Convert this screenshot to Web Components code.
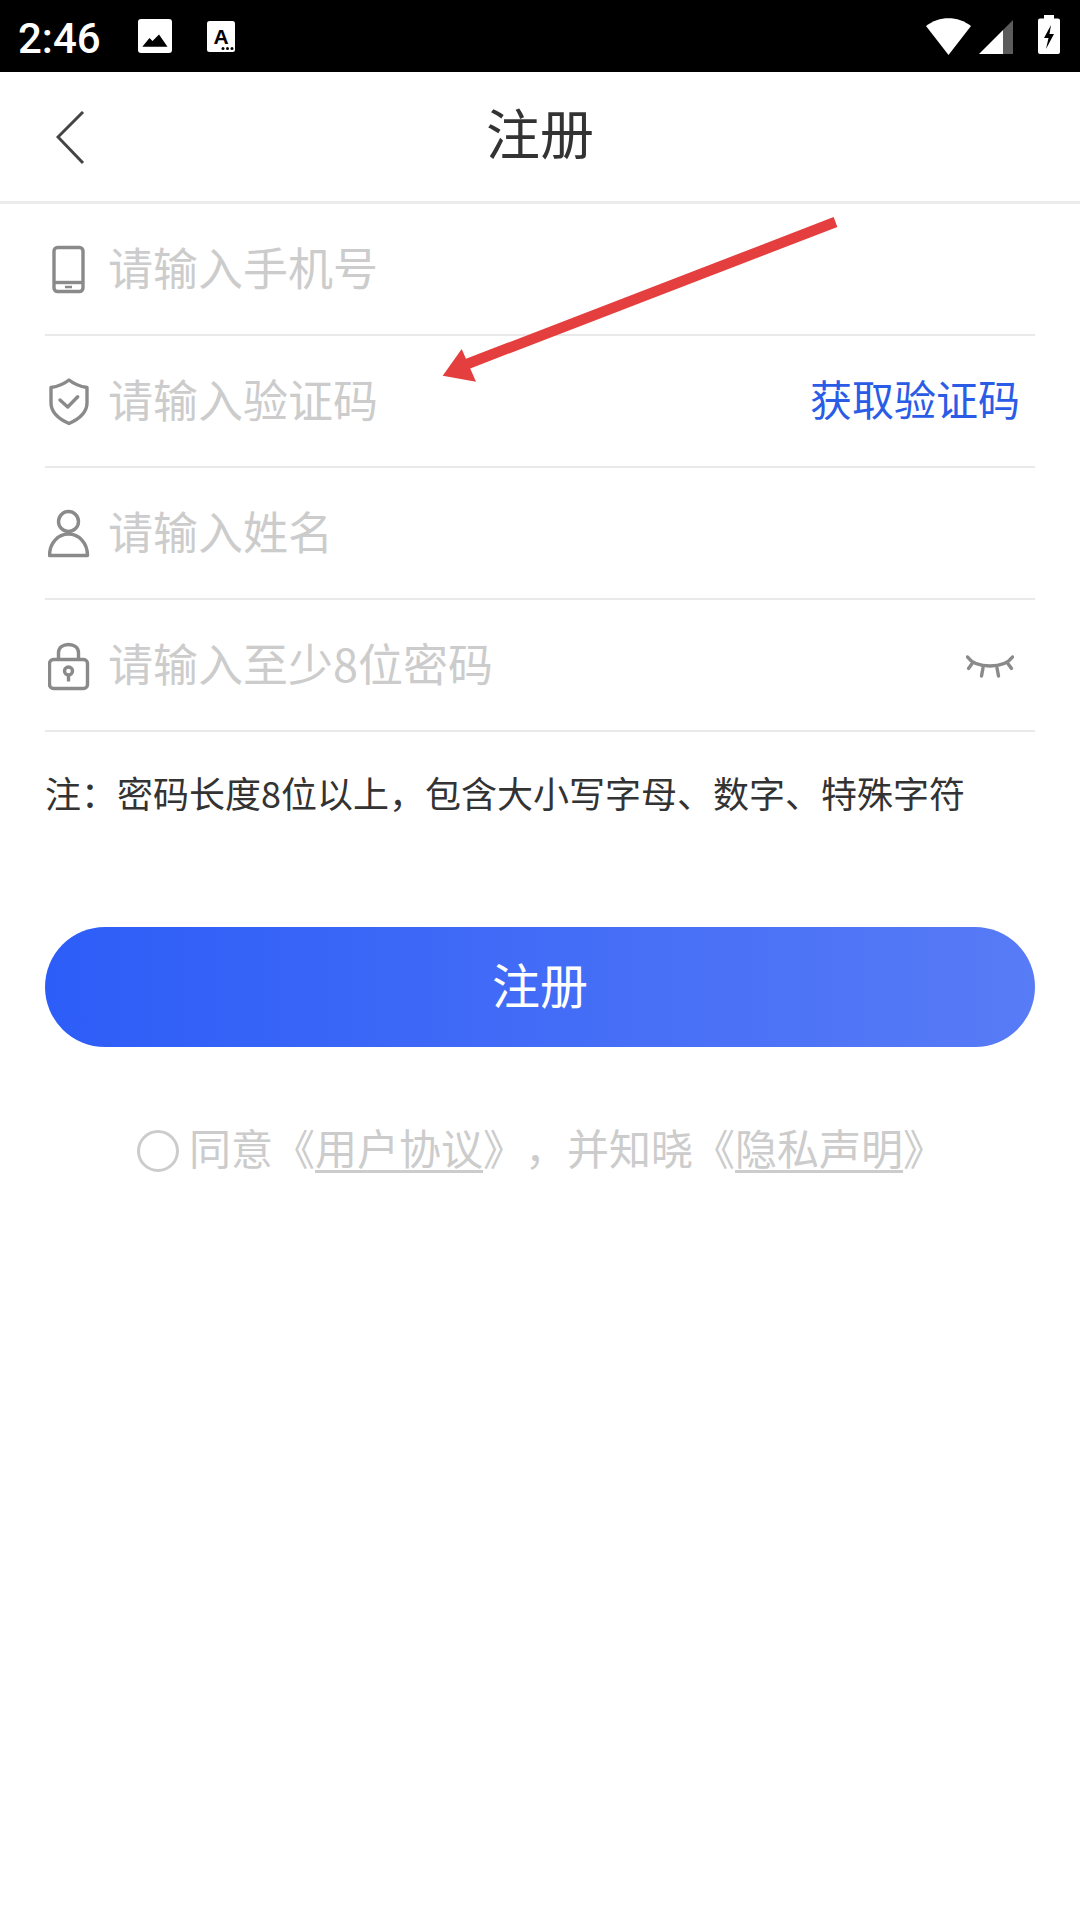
<!DOCTYPE html>
<html lang="zh-CN"><head><meta charset="utf-8"><title>注册</title>
<style>
html,body{margin:0;padding:0;background:#fff}
body{width:1080px;height:1920px;position:relative;overflow:hidden;font-family:"Noto Sans CJK SC","Noto Sans",sans-serif}
</style></head><body>
<app-status></app-status>
<app-nav>注册</app-nav>
<reg-form>
  <reg-field text="请输入手机号"><svg slot="icon" width="42" height="52" viewBox="0 0 42 52" fill="none" stroke="#8a8a8a" stroke-width="3.400"><rect x="6" y="4.500" width="29" height="44" rx="3.500"/><path d="M6 39.500h29"/><path d="M17 44h7" stroke-width="2.500"/></svg></reg-field>
  <reg-field text="请输入验证码"><svg slot="icon" width="42" height="52" viewBox="0 0 42 52" fill="none" stroke="#8a8a8a" stroke-width="3.400" stroke-linejoin="round"><path d="M21 5 C26 9 32 11.500 39 12.500 V28 C39 38 30 44.500 21 48.500 C12 44.500 3 38 3 28 V12.500 C10 11.500 16 9 21 5Z"/><path d="M12 25 L19.700 32 L29.700 21.700" stroke-linecap="round"/></svg><span slot="action">获取验证码</span></reg-field>
  <reg-field text="请输入姓名"><svg slot="icon" width="42" height="52" viewBox="0 0 42 52" fill="none" stroke="#8a8a8a" stroke-width="3.400"><circle cx="20.500" cy="14.500" r="10"/><path d="M1.500 48.500 C1.500 36 10 27 20.500 27 C31 27 39.500 36 39.500 48.500Z" stroke-linejoin="round"/></svg></reg-field>
  <reg-field text="请输入至少8位密码"><svg slot="icon" width="42" height="52" viewBox="0 0 42 52" fill="none" stroke="#8a8a8a" stroke-width="3.400"><rect x="1.500" y="20.500" width="38" height="29" rx="4"/><path d="M10.500 20 V14 C10.500 8.500 15 5.500 20.500 5.500 C26 5.500 30.500 8.500 30.500 14 V20"/><circle cx="20.500" cy="32" r="4"/><path d="M20.500 36 V42.500"/></svg><svg slot="action" width="48" height="24" viewBox="0 0 48 24" fill="none" stroke="#8a8a8a" stroke-width="3.400" stroke-linecap="round" style="margin-top:12px"><path d="M1.500 2 C10 14 38 14 46.500 2"/><path d="M6.500 8 L2.500 13.500"/><path d="M17 13 L15.500 21"/><path d="M31 13 L32.500 21"/><path d="M41.500 8 L45.500 13.500"/></svg></reg-field>
</reg-form>
<reg-note>注：密码长度8位以上，包含大小写字母、数字、特殊字符</reg-note>
<reg-button>注册</reg-button>
<reg-agree></reg-agree>
<red-arrow></red-arrow>
<script>
function def(name, css, html){
  customElements.define(name, class extends HTMLElement{
    constructor(){super();const r=this.attachShadow({mode:'open'});
      r.innerHTML='<style>'+css+'</style>'+html;}
  });
}
def('app-status',
 `:host{display:flex;align-items:center;height:72px;background:#000;color:#fff;padding:0 20px 0 18px;box-sizing:border-box}
  .t{font:500 42px/72px Roboto,sans-serif;width:120px;padding-top:3px;box-sizing:border-box;height:72px}
  svg{display:block}.sp{flex:1}`,
 `<span class="t">2:46</span>
  <svg width="34" height="34" viewBox="0 0 34 34" style="margin-right:35px"><rect width="34" height="34" rx="3" fill="#fff"/><path d="M4.300 27.700 L11.500 19 L14.500 22 L21 15.500 L29.500 27.700Z" fill="#000"/></svg>
  <svg width="28" height="31" viewBox="0 0 28 31"><rect width="28" height="31" rx="2.500" fill="#fff"/><text x="14" y="22.700" text-anchor="middle" font-family="Liberation Sans" font-weight="700" font-size="21" fill="#000">A</text><circle cx="16" cy="27.500" r="1.500"/><circle cx="20.500" cy="27.500" r="1.500"/><circle cx="25" cy="27.500" r="1.500"/></svg>
  <span class="sp"></span>
  <svg width="45" height="37" viewBox="0 0 45 37" style="margin-right:8px"><path d="M0 8 C13 -2.500 32 -2.500 45 8 L22.500 37Z" fill="#fff"/></svg>
  <svg width="35" height="35" viewBox="0 0 35 35" style="margin:2px 24px 0 0"><path d="M0 34 L24 10 V34Z" fill="#fff"/><path d="M24 10 L34 0 V34 H24Z" fill="#5c5c5c"/></svg>
  <svg width="22" height="39" viewBox="0 0 22 39" style="margin-top:-3px"><path d="M6 0h10v3.500h4a2 2 0 0 1 2 2V37a2 2 0 0 1-2 2H2a2 2 0 0 1-2-2V5.500a2 2 0 0 1 2-2h4Z" fill="#fff"/><path d="M13 10 L6 23 H10.500 L8 34 L16 19 H11.500 Z" fill="#000"/></svg>`);
def('app-nav',
 `:host{display:flex;align-items:center;justify-content:center;position:relative;height:132px;box-sizing:border-box;border-bottom:3px solid #ececec;background:#fff;color:#333;font-size:54px;padding-bottom:10px}
  svg{position:absolute;left:56px;top:39px}`,
 `<svg width="30" height="54" viewBox="0 0 30 54" fill="none" stroke="#444" stroke-width="3"><path d="M27 1 L2 26 L27 52"/></svg><slot></slot>`);
def('reg-form',`:host{display:block;padding:0 45px}`,`<slot></slot>`);
customElements.define('reg-field', class extends HTMLElement{
  constructor(){super();const r=this.attachShadow({mode:'open'});
    r.innerHTML=`<style>
    :host{display:flex;align-items:center;height:132px;box-sizing:border-box;border-bottom:2px solid #e9e9e9;font-size:45px;color:#ccc}
    .i{width:63px;flex:none;display:flex;align-items:center}
    .i ::slotted(svg){display:block;margin-left:3px}
    .p{flex:1;white-space:nowrap;padding-bottom:5px}
    .a{color:#2b5ce6;font-size:42px;display:flex;align-items:center;padding:0 15px 8px 0}
    .a ::slotted(svg){display:block;margin-right:6px}
    </style><span class="i"><slot name="icon"></slot></span><span class="p"></span><span class="a"><slot name="action"></slot></span>`;
    r.querySelector('.p').textContent=this.getAttribute('text');}
});
def('reg-note',`:host{display:block;padding:34px 45px 0;font-size:36px;line-height:52px;color:#333;white-space:nowrap}`,`<slot></slot>`);
def('reg-button',
 `:host{display:flex;align-items:center;justify-content:center;box-sizing:border-box;width:990px;height:120px;margin:109px 45px 0;padding-bottom:8px;border-radius:60px;background:linear-gradient(90deg,#2d5df8,#587bf6);color:#fff;font-size:48px}`,
 `<slot></slot>`);
def('reg-agree',
 `:host{display:flex;align-items:center;margin:74px 0 0 137px;font-size:42px;color:#ccc;height:60px;white-space:nowrap}
  i{display:block;width:42px;height:42px;box-sizing:border-box;border:3px solid #ccc;border-radius:50%;margin-right:10px;flex:none}
  span{padding-bottom:10px;text-spacing-trim:space-all;font-feature-settings:"palt" 0,"chws" 0}
  u{text-decoration-thickness:3px;text-underline-offset:5px}`,
 `<i></i><span>同意《<u>用户协议</u>》，并知晓《<u>隐私声明</u>》</span>`);
def('red-arrow',
 `:host{position:absolute;left:0;top:0;display:block;pointer-events:none}svg{display:block}`,
 `<svg width="1080" height="500" viewBox="0 0 1080 500"><path d="M835.500 222 L462 366" stroke="#e53e3e" stroke-width="10.500" fill="none"/><path d="M442.700 375.700 L461.700 349 L476 381.700Z" fill="#e53e3e"/></svg>`);
</script>
</body></html>
